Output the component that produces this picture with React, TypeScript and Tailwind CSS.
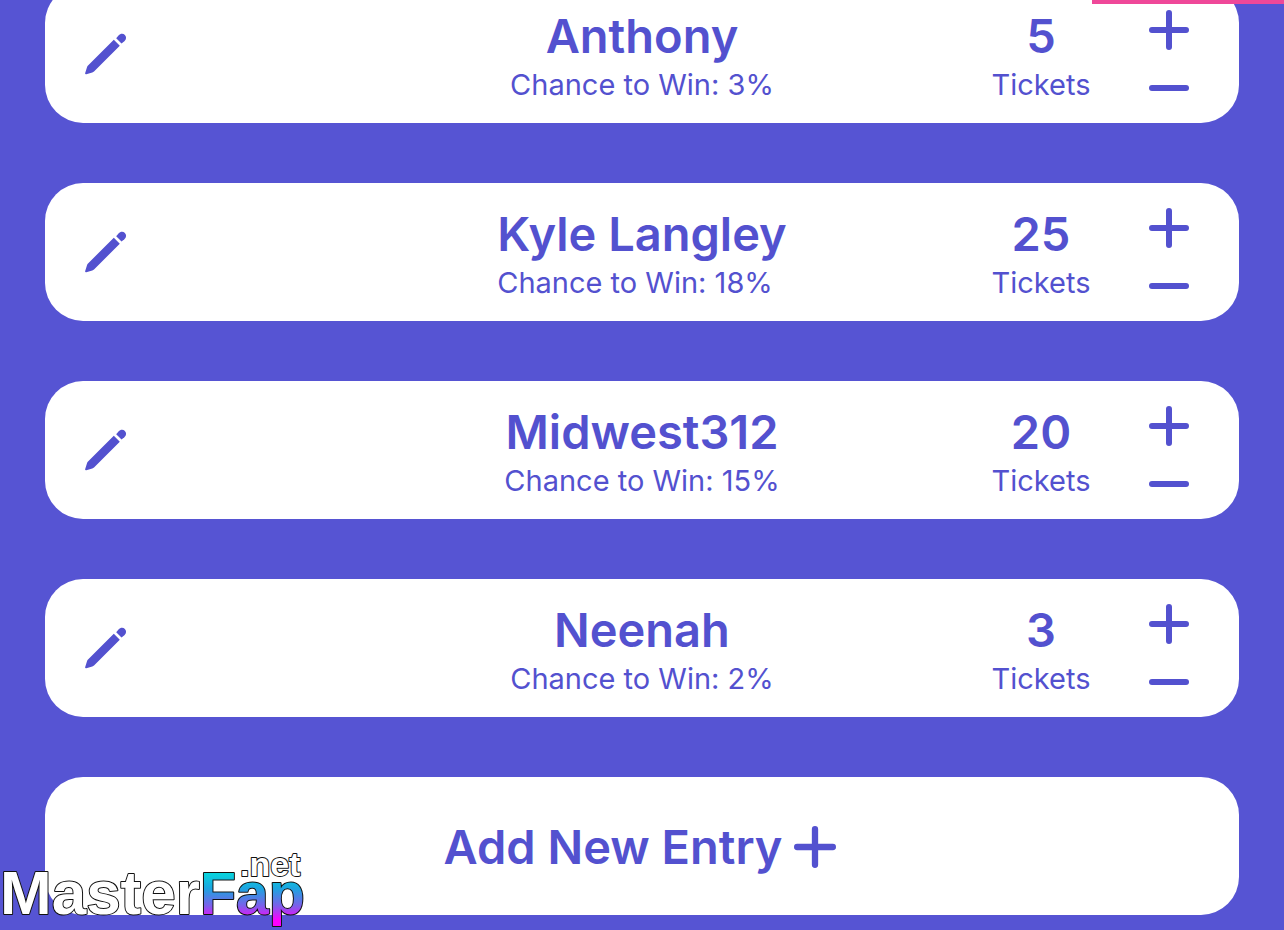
import React, { useState } from 'react';

interface Entry {
  id: number;
  name: string;
  tickets: number;
  chance: number;
}

const initialEntries: Entry[] = [
  { id: 1, name: 'Anthony', tickets: 5, chance: 3 },
  { id: 2, name: 'Kyle Langley', tickets: 25, chance: 18 },
  { id: 3, name: 'Midwest312', tickets: 20, chance: 15 },
  { id: 4, name: 'Neenah', tickets: 3, chance: 2 },
];

const PencilIcon = () => (
  <svg width="42" height="42" viewBox="0 0 42 42" fill="currentColor" aria-hidden="true">
    <path d="M1.3 41.2c-.9.2-1.400-.4-1.100-1.200L2 34.200c.2-.7.5-1.200 1-1.700L28.800 6.700l6 6L9 38.500c-.5.5-1 .8-1.700 1Z" />
    <path d="M31.200 5.300l2.300-2.900c1.900-2.100 4.700-2.200 6.400-.5 1.700 1.700 1.600 4.500-.5 6.400l-2.900 2.300Z" />
  </svg>
);

const PlusIcon = () => (
  <svg className="size-full" viewBox="0 0 40 40" fill="none" stroke="currentColor" strokeWidth="6" strokeLinecap="round" aria-hidden="true">
    <path d="M20 3v34M3 20h34" />
  </svg>
);

const MinusIcon = () => (
  <svg className="size-full" viewBox="0 0 40 40" fill="none" stroke="currentColor" strokeWidth="6" strokeLinecap="round" aria-hidden="true">
    <path d="M3 20h34" />
  </svg>
);

interface EntryCardProps {
  entry: Entry;
  onChange: (id: number, delta: number) => void;
}

const EntryCard: React.FC<EntryCardProps> = ({ entry, onChange }) => (
  <li className="grid h-[138px] grid-cols-[minmax(0,1fr)_auto_minmax(0,1fr)] items-center rounded-[38px] bg-white">
    <div className="pl-10">
      <button type="button" aria-label={`Edit ${entry.name}`} className="block">
        <PencilIcon />
      </button>
    </div>

    <div className="flex flex-col items-start pt-0.5">
      <h2 className="self-center text-[47px] leading-[60px] font-semibold">{entry.name}</h2>
      <p className="text-[29px] leading-[38px]">Chance to Win: {entry.chance}%</p>
    </div>

    <div className="flex items-center justify-end gap-12 pr-[50px]">
      <div className="w-[120px] pt-0.5 text-center">
        <div className="text-[47px] leading-[60px] font-semibold">{entry.tickets}</div>
        <div className="text-[29px] leading-[38px]">Tickets</div>
      </div>
      <div className="flex flex-col gap-[18px] pt-2.5">
        <button type="button" aria-label="Add ticket" className="size-10" onClick={() => onChange(entry.id, 1)}>
          <PlusIcon />
        </button>
        <button type="button" aria-label="Remove ticket" className="size-10" onClick={() => onChange(entry.id, -1)}>
          <MinusIcon />
        </button>
      </div>
    </div>
  </li>
);

const Watermark = () => (
  <svg
    className="pointer-events-none absolute bottom-0 left-0 font-['Liberation_Sans',Arial,sans-serif] font-bold"
    width="320"
    height="90"
    viewBox="0 0 320 90"
    stroke="#111"
    strokeWidth="2"
    strokeLinejoin="round"
    paintOrder="stroke"
  >
    <defs>
      <linearGradient id="logo-fill" gradientUnits="userSpaceOnUse" x1="0" y1="28" x2="0" y2="86">
        <stop offset="0" stopColor="#00e5dc" />
        <stop offset="0.35" stopColor="#1ca5e0" />
        <stop offset="0.65" stopColor="#7a60ea" />
        <stop offset="0.9" stopColor="#ff00ff" />
      </linearGradient>
    </defs>
    <text x="0" y="74" fontSize="62" fill="#fff">Master</text>
    <text x="200" y="74" fontSize="59" fill="url(#logo-fill)">Fap</text>
    <text x="240" y="36" fontSize="34" fill="#fff">.net</text>
  </svg>
);

export default function App() {
  const [entries, setEntries] = useState<Entry[]>(initialEntries);

  const handleChange = (id: number, delta: number) => {
    setEntries(prev =>
      prev.map(e => (e.id === id ? { ...e, tickets: Math.max(0, e.tickets + delta) } : e))
    );
  };

  return (
    <main className="relative min-h-screen overflow-hidden bg-[#5654d3] px-[45px] pb-[15px] font-[Inter,sans-serif] text-[#5351cf]">
      <ul className="-mt-[15px] flex flex-col gap-[60px]">
        {entries.map(entry => (
          <EntryCard key={entry.id} entry={entry} onChange={handleChange} />
        ))}
      </ul>

      <button
        type="button"
        className="mt-[60px] flex h-[138px] w-full items-center justify-center gap-3 rounded-[38px] bg-white pt-0.5 pr-1 text-[47px] leading-[60px] font-semibold"
      >
        Add New Entry
        <span className="size-[42px]">
          <PlusIcon />
        </span>
      </button>

      <div className="absolute top-0 right-0 h-1 w-48 bg-[#ef4899]" />
      <Watermark />
    </main>
  );
}
